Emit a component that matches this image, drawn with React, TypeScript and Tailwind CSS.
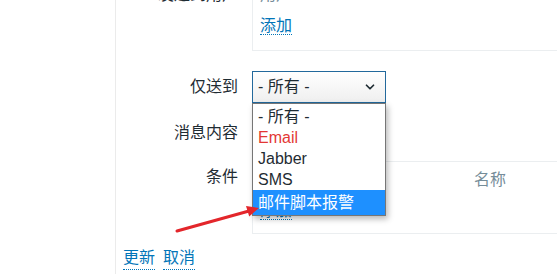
import React from 'react';
import { ChevronDown } from 'lucide-react';

const OPTIONS = [
  { label: '- 所有 -', cls: 'text-[#1f2c33] h-[21px]' },
  { label: 'Email', cls: 'text-[#e33734] h-[21px]' },
  { label: 'Jabber', cls: 'text-[#1f2c33] h-[21px]' },
  { label: 'SMS', cls: 'text-[#1f2c33] h-[21px]' },
  { label: '邮件脚本报警', cls: 'text-white bg-[#1e90ff] h-[25px]' },
];

function Link({ children }: { children: React.ReactNode }) {
  return (
    <span className="text-[#0275b8] border-b border-dotted border-[#0275b8] cursor-pointer">{children}</span>
  );
}

export default function App() {
  return (
    <div className="relative w-[557px] h-[274px] overflow-hidden bg-white text-[16px] text-[#1f2c33] font-['Liberation_Sans','Noto_Sans_CJK_SC',sans-serif]">
      <div className="flex h-full">
        <div className="w-[115px] shrink-0" />
        <div className="flex-1 border-l border-[#ebebeb] h-full">
          {/* Send to users */}
          <div className="flex gap-[14px] -mt-[16px]">
            <div className="w-[122px] text-right leading-[22px]">发送到用户</div>
            <div className="flex-1 border-l border-b border-[#ebeef0] pl-[7px] pb-[13px]">
              <div className="leading-[22px] text-[#768d99]">用户</div>
              <div className="leading-[22px] mt-[9px]">
                <Link>添加</Link>
              </div>
            </div>
          </div>

          {/* Send only to */}
          <div className="flex items-center gap-[14px] mt-[20px]">
            <div className="w-[122px] text-right leading-[22px]">仅送到</div>
            <div className="relative w-[134px] h-[32px]">
              <div className="h-full border border-[#23699c] bg-gradient-to-b from-white to-[#efefef] flex items-center justify-between pl-[5px] pr-[8px]">
                <span className="leading-[22px]">- 所有 -</span>
                <ChevronDown className="w-[14px] h-[14px] text-[#1f2c33]" strokeWidth={3} />
              </div>
              <div className="absolute left-0 top-[32px] w-[134px] z-10 border border-[#767676] bg-white pt-[2px] shadow-[2px_3px_6px_rgba(0,0,0,0.28)]">
                {OPTIONS.map((o) => (
                  <div key={o.label} className={`flex items-center pl-[5px] leading-[21px] ${o.cls}`}>
                    {o.label}
                  </div>
                ))}
              </div>
            </div>
          </div>

          {/* Message content */}
          <div className="flex gap-[14px] mt-[19px]">
            <div className="w-[122px] text-right leading-[22px]">消息内容</div>
            <div className="flex-1" />
          </div>

          {/* Conditions */}
          <div className="flex items-start gap-[14px] mt-[17px]">
            <div className="w-[122px] text-right leading-[22px] mt-[5px]">条件</div>
            <div className="flex-1 border-t border-l border-b border-[#ebeef0] pl-[7px] pt-[7px] pb-[11px]">
              <div className="flex leading-[22px] text-[#768d99]">
                <span className="w-[214px]" />
                <span>名称</span>
              </div>
              <div className="leading-[22px] mt-[9px]">
                <Link>添加</Link>
              </div>
            </div>
          </div>

          {/* Buttons */}
          <div className="flex gap-[8px] pl-[7px] mt-[13px] leading-[22px]">
            <Link>更新</Link>
            <Link>取消</Link>
          </div>
        </div>
      </div>

      {/* annotation arrow */}
      <svg className="absolute left-0 top-0 z-20 pointer-events-none" width="557" height="274" viewBox="0 0 557 274">
        <line x1="177" y1="231" x2="249" y2="211" stroke="#e3262b" strokeWidth="3" strokeLinecap="round" />
        <polygon points="259,208 249.2,216.5 246,206" fill="#e3262b" />
      </svg>
    </div>
  );
}
